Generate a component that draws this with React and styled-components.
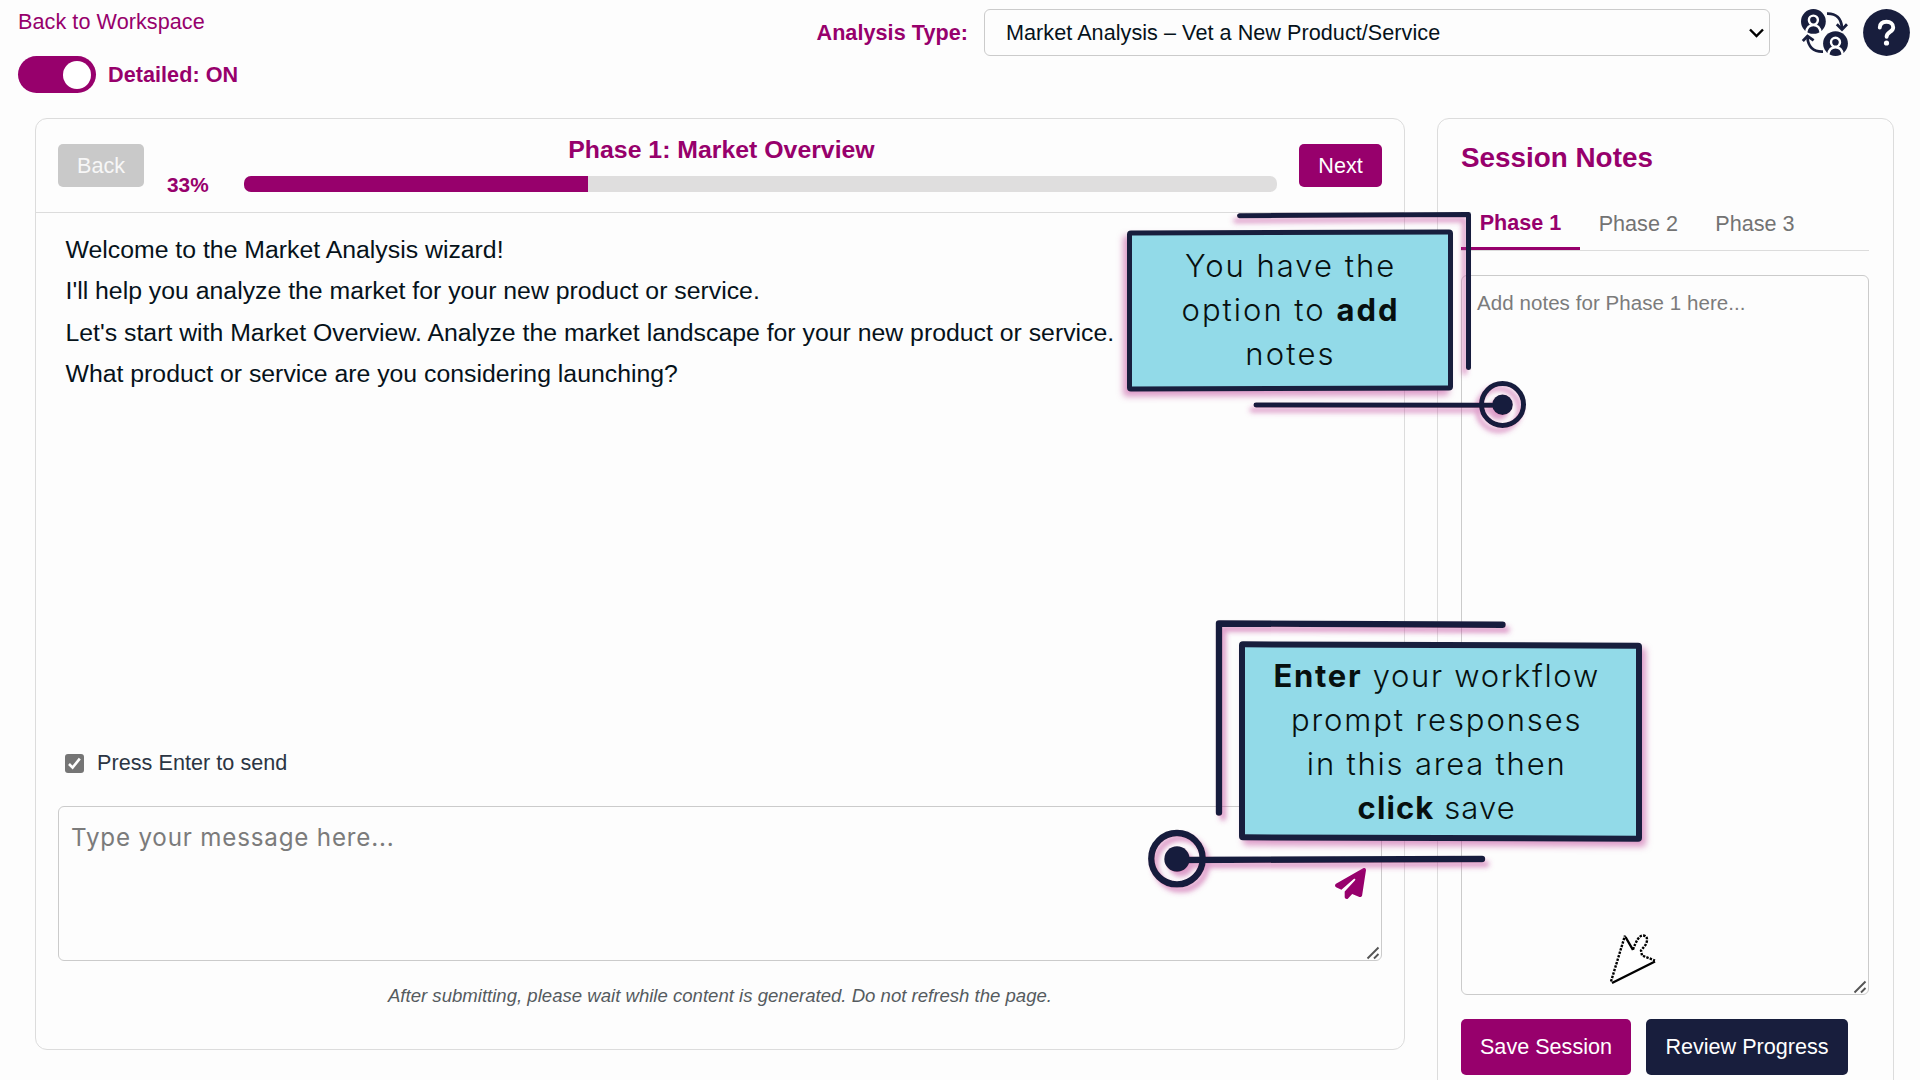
import React from "react";
import styled, { createGlobalStyle } from "styled-components";
import { FaPaperPlane } from "react-icons/fa6";

const magenta = "#97006c";
const navy = "#181e3d";
const line = "#dcdcdc";
const field = "#cbcbcb";

const GlobalStyle = createGlobalStyle`
  * { box-sizing: border-box; }
  body {
    margin: 0;
    background: #fdfdfd;
    font-family: "Liberation Sans", Arial, sans-serif;
    font-size: 21.6px;
    color: #06121a;
    overflow: hidden;
  }
`;

const Page = styled.div`
  position: relative;
  width: 1920px;
  height: 1080px;
  overflow: hidden;
`;

const TopBar = styled.header`
  display: flex;
  justify-content: space-between;
  align-items: flex-start;
  padding: 9px 10px 0 18px;
`;

const TopLeft = styled.div`
  display: flex;
  flex-direction: column;
  gap: 22px;
`;

const BackLink = styled.a`
  color: ${magenta};
  line-height: 25px;
  letter-spacing: 0.07px;
`;

const ToggleRow = styled.div`
  display: flex;
  align-items: center;
  gap: 12px;
  height: 37px;
`;

const Toggle = styled.div`
  display: flex;
  justify-content: flex-end;
  align-items: center;
  width: 78px;
  height: 37px;
  padding: 0 5px;
  border-radius: 19px;
  background: ${magenta};
`;

const Knob = styled.div`
  width: 28px;
  height: 28px;
  border-radius: 50%;
  background: #fff;
`;

const Strong = styled.span`
  color: ${magenta};
  font-weight: 700;
  line-height: 25px;
  letter-spacing: 0.05px;
`;

const TopRight = styled.div`
  display: flex;
  align-items: center;
  height: 47px;
`;

const Select = styled.div`
  display: flex;
  align-items: center;
  justify-content: space-between;
  width: 786px;
  height: 47px;
  margin: 0 31px 0 16px;
  padding: 0 5px 0 21px;
  border: 1px solid ${field};
  border-radius: 6px;
  letter-spacing: 0.05px;
`;

const HelpIcon = styled.svg`
  margin-left: 15px;
`;

const Main = styled.main`
  display: flex;
  align-items: flex-start;
  gap: 32px;
  margin-top: 25px;
  padding-left: 35px;
`;

const Panel = styled.section`
  display: flex;
  flex-direction: column;
  width: ${(p) => p.$width}px;
  height: ${(p) => p.$height}px;
  border: 1px solid ${line};
  border-radius: 12px;
`;

const PhaseHeader = styled.div`
  display: flex;
  align-items: center;
  flex: none;
  height: 94px;
  padding: 0 22px;
  border-bottom: 1px solid ${line};
`;

const Button = styled.button`
  flex: none;
  width: ${(p) => p.$width}px;
  height: ${(p) => p.$height || 43}px;
  padding: 0;
  border: 0;
  border-radius: 5px;
  background: ${(p) => p.$color};
  color: ${(p) => p.$text || "#fff"};
  font: inherit;
`;

const Progress = styled.div`
  display: flex;
  flex-direction: column;
  flex: 1;
  gap: 7px;
  margin: 0 22px;
`;

const PhaseTitle = styled.h2`
  margin: 0;
  color: ${magenta};
  font-size: 24.84px;
  line-height: 30px;
  text-align: center;
`;

const ProgressRow = styled.div`
  display: flex;
  align-items: center;
  height: 24px;
`;

const Percent = styled(Strong)`
  width: 78px;
  padding-left: 1px;
  font-size: 20.8px;
`;

const Track = styled.div`
  flex: 1;
  height: 16px;
  border-radius: 7px;
  background: #dfdede;
  overflow: hidden;
`;

const Fill = styled.div`
  height: 100%;
  background: ${magenta};
`;

const Messages = styled.div`
  flex: 1;
  padding: 16px 30px 16px 29.5px;
  font-size: 24.82px;
  line-height: 41.4px;
`;

const Message = styled.p`
  margin: 0;
  white-space: nowrap;
`;

const Composer = styled.div`
  display: flex;
  flex-direction: column;
  padding: 0 22px 41px;
`;

const CheckRow = styled.label`
  display: flex;
  align-items: center;
  gap: 13px;
  height: 26px;
  margin-bottom: 30px;
  padding-left: 7px;
  color: #2b3543;
  letter-spacing: 0.04px;
`;

const MessageField = styled.div`
  display: flex;
  justify-content: space-between;
  height: 155px;
  padding: 16px 1px 0 12px;
  border: 1px solid ${field};
  border-radius: 6px;
`;

const MessageHint = styled.span`
  color: #7b7b7b;
  font-family: Inter, "Open Sans", sans-serif;
  font-size: 24.2px;
  line-height: 30px;
  letter-spacing: 0.8px;
`;

const FieldTools = styled.div`
  display: flex;
  flex-direction: column;
  align-items: flex-end;
  justify-content: space-between;
  padding-top: 45px;
`;

const SendIcon = styled(FaPaperPlane)`
  margin-right: 14px;
  color: ${magenta};
`;

const Notice = styled.p`
  margin: 23px 0 0;
  color: #555b5f;
  font-size: 18.58px;
  font-style: italic;
  line-height: 24px;
  text-align: center;
`;

const NotesBody = styled.div`
  display: flex;
  flex-direction: column;
  padding: 22px 24px 0 23px;
`;

const NotesTitle = styled.h2`
  margin: 0 0 22px;
  color: ${magenta};
  font-size: 27.85px;
  line-height: 34px;
`;

const Tabs = styled.div`
  display: flex;
  height: 54px;
  border-bottom: 1px solid ${line};
`;

const Tab = styled.div`
  display: flex;
  align-items: center;
  padding: 1px 18.7px 0;
  color: ${(p) => (p.$active ? magenta : "#737373")};
  font-weight: ${(p) => (p.$active ? 700 : 400)};
  border-bottom: ${(p) => (p.$active ? `3px solid ${magenta}` : "0")};
`;

const NotesField = styled.div`
  display: flex;
  flex-direction: column;
  justify-content: space-between;
  height: 720px;
  margin: 24px 0;
  padding: 14px 1px 0 15px;
  border: 1px solid ${field};
  border-radius: 6px;
  color: #7b7b7b;
  font-size: 20.52px;
  line-height: 26px;
  letter-spacing: 0.06px;
`;

const Grip = styled.svg`
  flex: none;
  align-self: flex-end;
`;

const Actions = styled.div`
  display: flex;
  gap: 15px;
`;

const Callout = styled.div`
  position: absolute;
  left: ${(p) => p.$x}px;
  top: ${(p) => p.$y}px;
  display: flex;
  align-items: center;
  justify-content: center;
  width: ${(p) => p.$w}px;
  height: ${(p) => p.$h}px;
  border: ${(p) => p.$b}px solid ${navy};
  border-radius: 4px;
  background: #92dae8;
  box-shadow: ${(p) => p.$dx}px 5px 6px rgba(190, 60, 150, 0.5);
  transform: skewY(${(p) => p.$skew}deg);
`;

const CalloutText = styled.div`
  transform: skewY(${(p) => p.$skew}deg) translate(${(p) => p.$shift});
  color: #07100f;
  font-family: Inter, "Open Sans", sans-serif;
  font-size: ${(p) => p.$size}px;
  font-weight: 300;
  line-height: ${(p) => p.$lh}px;
  text-align: center;
  white-space: nowrap;
  b { font-weight: 700; }
`;

const CalloutLine = styled.div`
  letter-spacing: ${(p) => p.$ls}px;
`;

const Overlay = styled.svg`
  position: absolute;
  left: 0;
  top: 0;
  pointer-events: none;
`;

const ResizeGrip = () => (
  <Grip width="14" height="15" viewBox="0 0 14 15" stroke="#555" strokeWidth="1.9" fill="none">
    <path d="M1.500 13.500L12.500 2.500M8 13.500L12.500 9" />
  </Grip>
);

const Person = ({ x, y }) => (
  <g transform={`translate(${x} ${y})`}>
    <circle r="12.4" fill={navy} />
    <circle cy="-1.3" r="4.5" fill="none" stroke="#fff" strokeWidth="2.4" />
    <path d="M-7.200 10.800C-6.500 5.900-3.800 3.700 0 3.700S6.500 5.900 7.200 10.800" fill="none" stroke="#fff" strokeWidth="2.4" />
  </g>
);

const SwitchUsers = () => (
  <svg width="47" height="47" viewBox="0 0 47 47">
    <Person x={12.4} y={12.4} />
    <Person x={34.5} y={34.6} />
    <g fill="none" stroke={navy} strokeWidth="2.8">
      <path d="M26 4.600C35 4.300 40.500 9.500 40.900 19" />
      <path d="M35.800 15.200L41 20.400L46 15.200" />
      <path d="M22 42.600C12 43 7 37 6.500 28.500" />
      <path d="M1.800 32L6.500 27L12.600 31.400" />
    </g>
  </svg>
);

const Help = () => (
  <HelpIcon width="47" height="47" viewBox="0 0 47 47">
    <circle cx="23.5" cy="23.5" r="23.4" fill={navy} />
    <path d="M16.800 18.500C17 14.500 19.600 12.800 23.500 12.800S30.200 15 30.200 18.400C30.200 23 23.600 22.800 23.600 27.800" fill="none" stroke="#fff" strokeWidth="3.9" strokeLinecap="round" />
    <circle cx="23.5" cy="34" r="2.6" fill="#fff" />
  </HelpIcon>
);

const Pointer = () => (
  <g transform="translate(1608 932.5)">
    <path d="M3 50L16.500 4L25.500 18L34 4L39 3L41 8L35 19L36 23L47 28Z" fill="#fff" />
    <path d="M3 49L17 3M25 17C28 9 31 3 35 3C40 3 40 9 37 13L33 18L34 23L47 28" fill="none" stroke="#000" strokeWidth="2.4" strokeDasharray="2.4 1.2" />
    <path d="M17.500 4.500L25 17.500M4 50.500L47 29" fill="none" stroke="#000" strokeWidth="2.4" />
  </g>
);

const messages = [
  "Welcome to the Market Analysis wizard!",
  "I'll help you analyze the market for your new product or service.",
  "Let's start with Market Overview. Analyze the market landscape for your new product or service.",
  "What product or service are you considering launching?",
];

export default function App() {
  const progress = 33.3;
  return (
    <Page>
      <GlobalStyle />
      <TopBar>
        <TopLeft>
          <BackLink>Back to Workspace</BackLink>
          <ToggleRow>
            <Toggle><Knob /></Toggle>
            <Strong>Detailed: ON</Strong>
          </ToggleRow>
        </TopLeft>
        <TopRight>
          <Strong>Analysis Type:</Strong>
          <Select>
            Market Analysis – Vet a New Product/Service
            <svg width="15" height="10" viewBox="0 0 15 10" fill="none" stroke="#000" strokeWidth="2.4">
              <path d="M1 1.500L7.500 8L14 1.500" />
            </svg>
          </Select>
          <SwitchUsers />
          <Help />
        </TopRight>
      </TopBar>

      <Main>
        <Panel $width={1370} $height={932}>
          <PhaseHeader>
            <Button $width={86} $color="#c9c9c9" $text="#f7f7f7">Back</Button>
            <Progress>
              <PhaseTitle>Phase 1: Market Overview</PhaseTitle>
              <ProgressRow>
                <Percent>33%</Percent>
                <Track><Fill style={{ width: `${progress}%` }} /></Track>
              </ProgressRow>
            </Progress>
            <Button $width={83} $color={magenta}>Next</Button>
          </PhaseHeader>
          <Messages>
            {messages.map((m) => <Message key={m}>{m}</Message>)}
          </Messages>
          <Composer>
            <CheckRow>
              <svg width="19" height="19" viewBox="0 0 19 19">
                <rect width="19" height="19" rx="3" fill="#757575" />
                <path d="M4 10L7.600 13.600L14.800 4.600" fill="none" stroke="#fff" strokeWidth="2.6" />
              </svg>
              Press Enter to send
            </CheckRow>
            <MessageField>
              <MessageHint>Type your message here...</MessageHint>
              <FieldTools>
                <SendIcon size={31} />
                <ResizeGrip />
              </FieldTools>
            </MessageField>
            <Notice>After submitting, please wait while content is generated. Do not refresh the page.</Notice>
          </Composer>
        </Panel>

        <Panel $width={457} $height={1000}>
          <NotesBody>
            <NotesTitle>Session Notes</NotesTitle>
            <Tabs>
              <Tab $active>Phase 1</Tab>
              <Tab>Phase 2</Tab>
              <Tab>Phase 3</Tab>
            </Tabs>
            <NotesField>
              Add notes for Phase 1 here...
              <ResizeGrip />
            </NotesField>
            <Actions>
              <Button $width={170} $height={56} $color={magenta}>Save Session</Button>
              <Button $width={202} $height={56} $color={navy}>Review Progress</Button>
            </Actions>
          </NotesBody>
        </Panel>
      </Main>

      <Overlay width="1920" height="1080" viewBox="0 0 1920 1080">
        <defs>
          <filter id="glowLeft" x="-20%" y="-20%" width="140%" height="140%">
            <feDropShadow dx="-4" dy="5" stdDeviation="2.5" floodColor="#be3c96" floodOpacity="0.5" />
          </filter>
          <filter id="glowRight" x="-20%" y="-20%" width="140%" height="140%">
            <feDropShadow dx="4" dy="5" stdDeviation="2.5" floodColor="#be3c96" floodOpacity="0.5" />
          </filter>
        </defs>
        <g filter="url(#glowLeft)" fill="none" stroke={navy} strokeWidth="5" strokeLinecap="round" strokeLinejoin="round">
          <path d="M1239.500 215.700L1468.500 214.500V367.500" />
          <path d="M1256 404.900L1502 405.300" />
          <circle cx="1502.5" cy="404.5" r="21" />
          <circle cx="1502.5" cy="404.8" r="10.3" fill={navy} stroke="none" />
        </g>
        <g filter="url(#glowRight)" fill="none" stroke={navy} strokeWidth="6.4" strokeLinecap="round" strokeLinejoin="round">
          <path d="M1219 812.500V623.500L1502.500 624.800" />
          <path d="M1177 860L1482 859" />
          <circle cx="1177" cy="858.7" r="25.7" />
          <circle cx="1177" cy="859" r="12.7" fill={navy} stroke="none" />
        </g>
        <Pointer />
      </Overlay>

      <Callout $x={1126.5} $y={229.5} $w={325.5} $h={160.5} $b={5} $dx={-4} $skew={-0.2}>
        <CalloutText $skew={0.2} $size={31} $lh={44} $shift="0.5px, 0px">
          <CalloutLine $ls={2}>You have the</CalloutLine>
          <CalloutLine $ls={2}>option to <b>add</b></CalloutLine>
          <CalloutLine $ls={2.2}>notes</CalloutLine>
        </CalloutText>
      </Callout>
      <Callout $x={1239} $y={642} $w={403} $h={198.5} $b={6} $dx={4} $skew={0.2}>
        <CalloutText $skew={-0.2} $size={31} $lh={43.9} $shift="-3.5px, 1px">
          <CalloutLine $ls={1.7}><b>Enter</b> your workflow</CalloutLine>
          <CalloutLine $ls={1.9}>prompt responses</CalloutLine>
          <CalloutLine $ls={1.8}>in this area then</CalloutLine>
          <CalloutLine $ls={1.1}><b>click</b> save</CalloutLine>
        </CalloutText>
      </Callout>
    </Page>
  );
}
